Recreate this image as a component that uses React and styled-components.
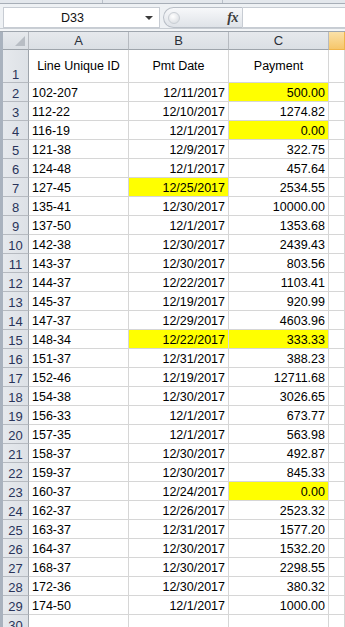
import React from "react";
import styled, { createGlobalStyle } from "styled-components";

const GlobalStyle = createGlobalStyle`
	html, body {
		margin: 0;
		padding: 0;
		background: #ffffff;
	}
	body {
		font-family: "Liberation Sans", Arial, sans-serif;
	}
`;

const Window = styled.div`
	width: 345px;
	height: 627px;
	overflow: hidden;
	display: flex;
	flex-direction: column;
	background: #ffffff;
`;

const TopStrip = styled.div`
	height: 3px;
	flex: none;
	display: grid;
	grid-template-columns: 103px 120px 1fr;
	background: #e3e7ec;
	border-bottom: 1px solid #a7aeb7;
`;

const StripCell = styled.div`
	border-right: 1px solid #b9c0c9;
`;

const FormulaRow = styled.div`
	height: 25px;
	flex: none;
	display: flex;
	align-items: stretch;
	padding: 3px 0 0 3px;
	box-sizing: border-box;
	background: #eef1f4;
	border-bottom: 1px solid #c9ced4;
`;

const NameBox = styled.div`
	width: 157px;
	height: 21px;
	box-sizing: border-box;
	background: #ffffff;
	border: 1px solid #c7ccd3;
	display: flex;
	align-items: center;
	position: relative;
	font-size: 12.5px;
	color: #111111;
`;

const NameText = styled.span`
	flex: 1;
	text-align: center;
	padding-right: 18px;
`;

const DropArrow = styled.span`
	position: absolute;
	right: 6px;
	top: 8px;
	width: 0;
	height: 0;
	border-left: 4px solid transparent;
	border-right: 4px solid transparent;
	border-top: 4px solid #3a3a3a;
`;

const Pill = styled.div`
	margin-left: 3px;
	width: 80px;
	height: 21px;
	box-sizing: border-box;
	border: 1px solid #b9bfc7;
	border-right: 1px solid #c7ccd3;
	border-radius: 11px 0 0 11px;
	background: linear-gradient(#f7f8fa, #dfe3e8);
	display: flex;
	align-items: center;
	justify-content: space-between;
	padding: 0 4px 0 4px;
`;

const Knob = styled.span`
	width: 10px;
	height: 10px;
	border-radius: 50%;
	background: radial-gradient(circle at 40% 35%, #ffffff, #d3d7dc);
	border: 1px solid #c9ced4;
`;

const Fx = styled.span`
	font-family: "Liberation Serif", "Times New Roman", serif;
	font-style: italic;
	font-weight: bold;
	font-size: 14px;
	line-height: 14px;
	color: #3c3c3c;
	letter-spacing: -0.5px;
`;

const FormulaInput = styled.div`
	flex: 1;
	height: 21px;
	box-sizing: border-box;
	background: #ffffff;
	border: 1px solid #c7ccd3;
	border-left: none;
	border-right: none;
`;

const Gap = styled.div`
	height: 2px;
	flex: none;
	background: #f3f5f7;
	border-bottom: 1px solid #9fa6ae;
`;

const Sheet = styled.div`
	flex: 1;
	display: grid;
	grid-template-columns: 26px 100px 100px 100px 1fr;
	grid-template-rows: 18px 33px;
	grid-auto-rows: 19px;
	border-left: 3px solid #a9b2be;
	font-size: 12.5px;
`;

const ColHead = styled.div`
	box-sizing: border-box;
	border-right: 1px solid ${({ $active }) => ($active ? "#f0b44a" : "#b6bac0")};
	border-bottom: 1px solid ${({ $active }) => ($active ? "#f0b44a" : "#9ea4ab")};
	background: ${({ $active }) =>
		$active
			? "linear-gradient(#fbe1a8, #f6c66a)"
			: "linear-gradient(#e6e9ed, #dbdfe4)"};
	color: #2a2f38;
	font-size: 13px;
	display: flex;
	align-items: center;
	justify-content: center;
	line-height: 15px;
	position: relative;
`;

const Corner = styled.span`
	position: absolute;
	right: 3px;
	bottom: 3px;
	width: 0;
	height: 0;
	border-left: 10px solid transparent;
	border-bottom: 10px solid #b8bdc4;
`;

const RowHead = styled.div`
	box-sizing: border-box;
	border-right: 1px solid #9ea4ab;
	border-bottom: 1px solid #b6bac0;
	background: linear-gradient(90deg, #e6e9ed, #dde1e6);
	color: #29345a;
	font-size: 13px;
	display: flex;
	align-items: flex-end;
	justify-content: center;
	line-height: 15px;
`;

const Cell = styled.div`
	box-sizing: border-box;
	border-right: 1px solid #d6d6d6;
	border-bottom: 1px solid #d6d6d6;
	background: ${({ $fill }) => ($fill ? "#ffff00" : "#ffffff")};
	color: #000000;
	display: flex;
	align-items: ${({ $center }) => ($center ? "center" : "flex-end")};
	justify-content: ${({ $align }) =>
		$align === "right" ? "flex-end" : $align === "center" ? "center" : "flex-start"};
	padding: 0 3px 0 3px;
	line-height: 15px;
	white-space: nowrap;
	overflow: hidden;
`;

const rows = [
	["102-207", "12/11/2017", "500.00", "", "c"],
	["112-22", "12/10/2017", "1274.82"],
	["116-19", "12/1/2017", "0.00", "", "c"],
	["121-38", "12/9/2017", "322.75"],
	["124-48", "12/1/2017", "457.64"],
	["127-45", "12/25/2017", "2534.55", "b"],
	["135-41", "12/30/2017", "10000.00"],
	["137-50", "12/1/2017", "1353.68"],
	["142-38", "12/30/2017", "2439.43"],
	["143-37", "12/30/2017", "803.56"],
	["144-37", "12/22/2017", "1103.41"],
	["145-37", "12/19/2017", "920.99"],
	["147-37", "12/29/2017", "4603.96"],
	["148-34", "12/22/2017", "333.33", "b", "c"],
	["151-37", "12/31/2017", "388.23"],
	["152-46", "12/19/2017", "12711.68"],
	["154-38", "12/30/2017", "3026.65"],
	["156-33", "12/1/2017", "673.77"],
	["157-35", "12/1/2017", "563.98"],
	["158-37", "12/30/2017", "492.87"],
	["159-37", "12/30/2017", "845.33"],
	["160-37", "12/24/2017", "0.00", "", "c"],
	["162-37", "12/26/2017", "2523.32"],
	["163-37", "12/31/2017", "1577.20"],
	["164-37", "12/30/2017", "1532.20"],
	["168-37", "12/30/2017", "2298.55"],
	["172-36", "12/30/2017", "380.32"],
	["174-50", "12/1/2017", "1000.00"],
	["", "", ""],
];

const App = () => {
	return (
		<Window>
			<GlobalStyle />
			<TopStrip>
				<StripCell />
				<StripCell />
				<div />
			</TopStrip>
			<FormulaRow>
				<NameBox>
					<NameText>D33</NameText>
					<DropArrow />
				</NameBox>
				<Pill>
					<Knob />
					<Fx>fx</Fx>
				</Pill>
				<FormulaInput />
			</FormulaRow>
			<Gap />
			<Sheet>
				<ColHead>
					<Corner />
				</ColHead>
				<ColHead>A</ColHead>
				<ColHead>B</ColHead>
				<ColHead>C</ColHead>
				<ColHead $active />

				<RowHead>1</RowHead>
				<Cell $center $align="center">Line Unique ID</Cell>
				<Cell $center $align="center">Pmt Date</Cell>
				<Cell $center $align="center">Payment</Cell>
				<Cell />

				{rows.map((r, i) => (
					<React.Fragment key={i}>
						<RowHead>{i + 2}</RowHead>
						<Cell>{r[0]}</Cell>
						<Cell $align="right" $fill={r[3] === "b"}>
							{r[1]}
						</Cell>
						<Cell $align="right" $fill={r[4] === "c"}>
							{r[2]}
						</Cell>
						<Cell />
					</React.Fragment>
				))}
			</Sheet>
		</Window>
	);
};

export default App;
